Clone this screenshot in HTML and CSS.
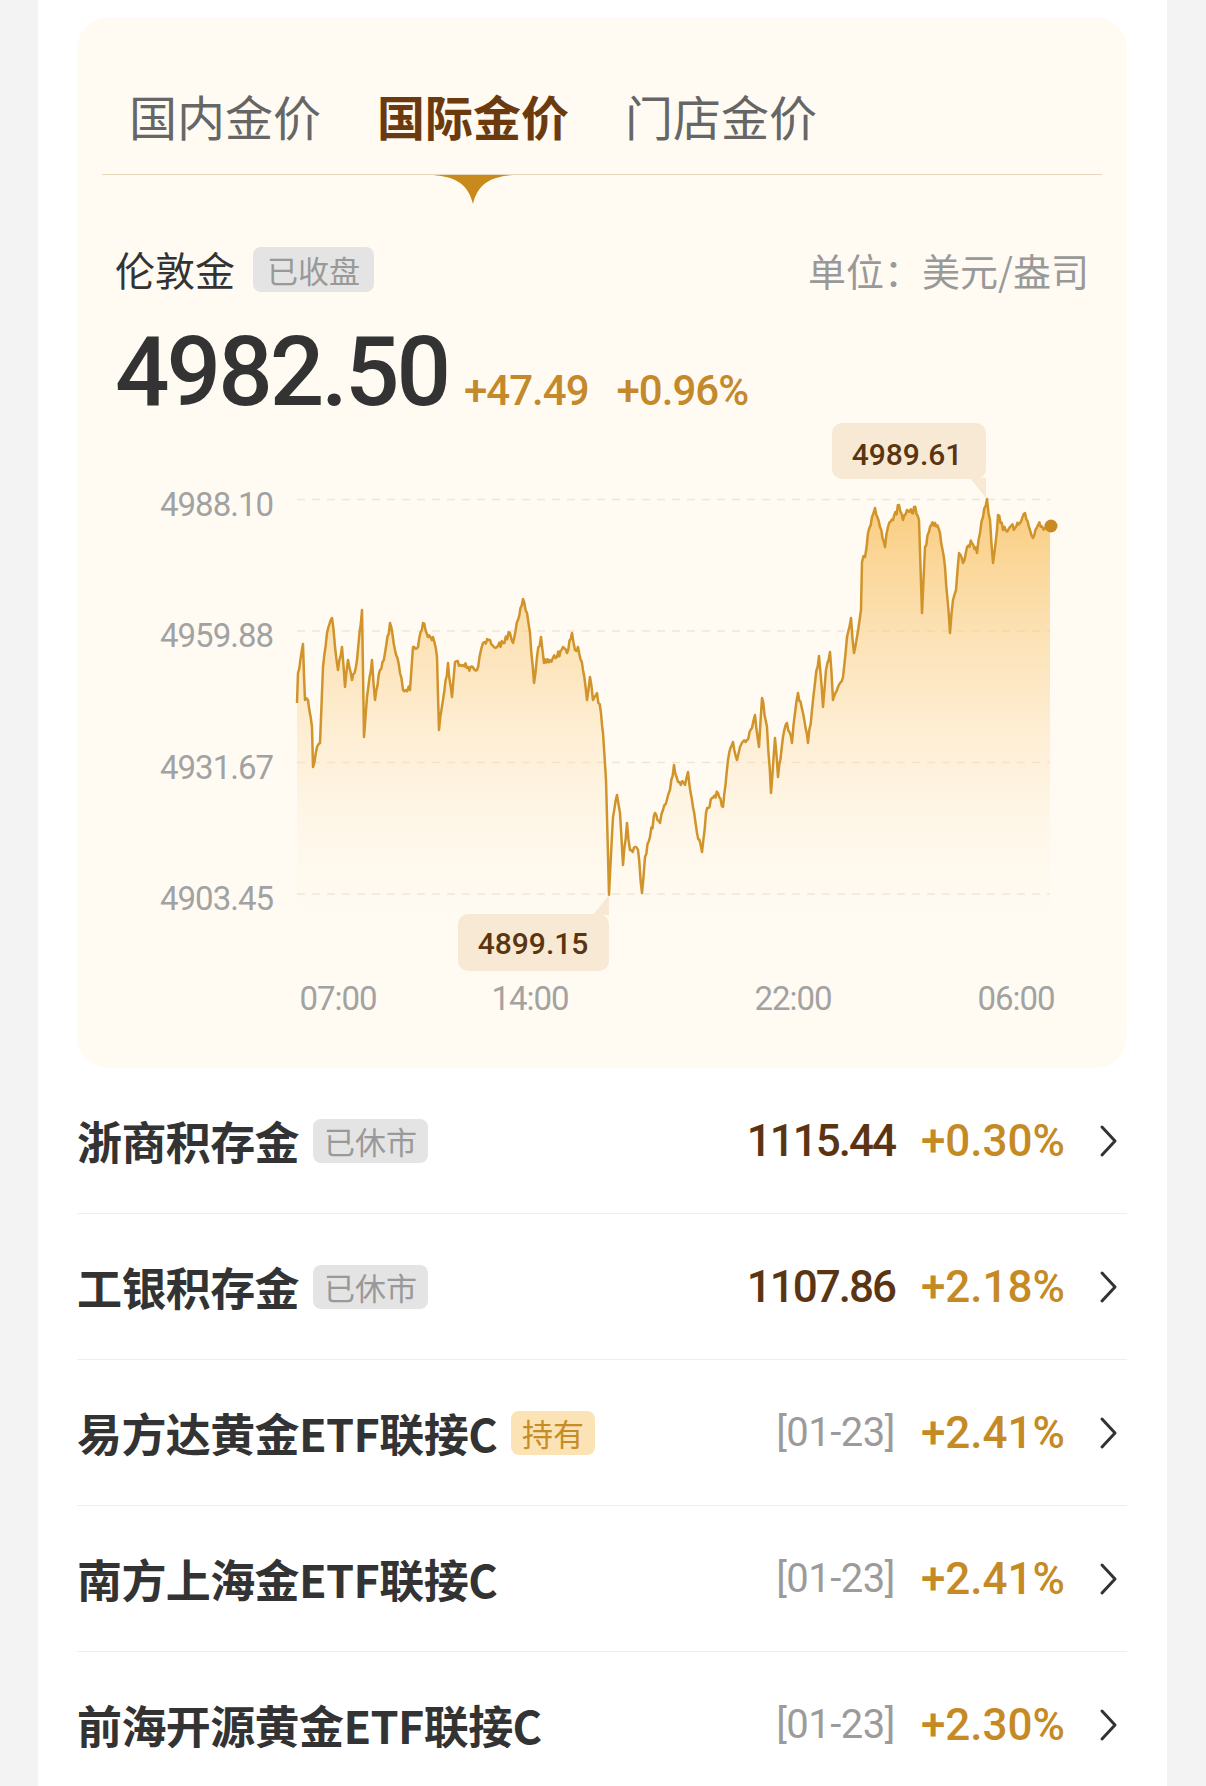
FILE: index.html
```html
<!DOCTYPE html>
<html lang="zh-CN">
<head>
  <meta charset="UTF-8" />
  <title>国际金价</title>
  <link rel="stylesheet" href="styles.css">
</head>
<body>
  <div class="page">
    <div class="card">
      <div class="tabs">
        <span class="tab">国内金价</span>
        <span class="tab active">国际金价<svg class="tab-arrow" width="80" height="29" viewBox="0 0 80 29"><path d="M0 0 H80 C57 2 45 9 40 29 C35 9 23 2 0 0 Z" fill="#c98a1d"/></svg></span>
        <span class="tab">门店金价</span>
      </div>

      <div class="quote-head">
        <span class="quote-name">伦敦金</span>
        <span class="tag">已收盘</span>
        <span class="unit">单位：美元/盎司</span>
      </div>

      <div class="price-row">
        <span class="price">4982.50</span>
        <span class="price-change">+47.49</span>
        <span class="price-change pct">+0.96%</span>
      </div>

      <svg class="chart" width="974" height="620" viewBox="0 0 974 620">
        <defs>
          <linearGradient id="fillGrad" gradientUnits="userSpaceOnUse" x1="0" y1="80" x2="0" y2="520">
            <stop offset="0" stop-color="#f8c060" stop-opacity="0.8"/>
            <stop offset="0.45" stop-color="#fbd495" stop-opacity="0.45"/>
            <stop offset="1" stop-color="#fff4e2" stop-opacity="0"/>
          </linearGradient>
        </defs>

        <!-- grid -->
        <line class="grid" x1="182" y1="79.5" x2="935" y2="79.5"/>
        <line class="grid" x1="182" y1="211" x2="935" y2="211"/>
        <line class="grid" x1="182" y1="342.5" x2="935" y2="342.5"/>
        <line class="grid" x1="182" y1="474" x2="935" y2="474"/>

        <text class="axis" x="158" y="95.5" text-anchor="end">4988.10</text>
        <text class="axis" x="158" y="227" text-anchor="end">4959.88</text>
        <text class="axis" x="158" y="358.5" text-anchor="end">4931.67</text>
        <text class="axis" x="158" y="490" text-anchor="end">4903.45</text>

        <text class="axis" x="223" y="590" text-anchor="middle">07:00</text>
        <text class="axis" x="415" y="590" text-anchor="middle">14:00</text>
        <text class="axis" x="678" y="590" text-anchor="middle">22:00</text>
        <text class="axis" x="901" y="590" text-anchor="middle">06:00</text>

        <path id="area" fill="url(#fillGrad)" d=""/>
        <path id="line" class="trend" d=""/>
        <circle cx="936" cy="106" r="6.5" fill="#c98a23"/>

        <!-- high / low tips -->
        <rect class="tip" x="717" y="3" width="154" height="56" rx="10"/>
        <polygon class="tip" points="855,58 871,58 871,78"/>
        <text class="tip-text" x="792" y="45" text-anchor="middle">4989.61</text>

        <rect class="tip" x="343" y="494" width="151" height="57" rx="10"/>
        <polygon class="tip" points="478,495 494,495 494,475"/>
        <text class="tip-text" x="418" y="534" text-anchor="middle">4899.15</text>
      </svg>
    </div>

    <ul class="list">
      <li class="row">
        <span class="row-name">浙商积存金</span>
        <span class="tag">已休市</span>
        <span class="row-right">
          <span class="row-value">1115.44</span>
          <span class="row-change">+0.30%</span>
          <svg class="chevron" width="20" height="34" viewBox="0 0 20 34"><path d="M3 3 L16 17 L3 31"/></svg>
        </span>
      </li>
      <li class="row">
        <span class="row-name">工银积存金</span>
        <span class="tag">已休市</span>
        <span class="row-right">
          <span class="row-value">1107.86</span>
          <span class="row-change">+2.18%</span>
          <svg class="chevron" width="20" height="34" viewBox="0 0 20 34"><path d="M3 3 L16 17 L3 31"/></svg>
        </span>
      </li>
      <li class="row">
        <span class="row-name">易方达黄金ETF联接C</span>
        <span class="tag held">持有</span>
        <span class="row-right">
          <span class="row-date">[01-23]</span>
          <span class="row-change">+2.41%</span>
          <svg class="chevron" width="20" height="34" viewBox="0 0 20 34"><path d="M3 3 L16 17 L3 31"/></svg>
        </span>
      </li>
      <li class="row">
        <span class="row-name">南方上海金ETF联接C</span>
        <span class="row-right">
          <span class="row-date">[01-23]</span>
          <span class="row-change">+2.41%</span>
          <svg class="chevron" width="20" height="34" viewBox="0 0 20 34"><path d="M3 3 L16 17 L3 31"/></svg>
        </span>
      </li>
      <li class="row">
        <span class="row-name">前海开源黄金ETF联接C</span>
        <span class="row-right">
          <span class="row-date">[01-23]</span>
          <span class="row-change">+2.30%</span>
          <svg class="chevron" width="20" height="34" viewBox="0 0 20 34"><path d="M3 3 L16 17 L3 31"/></svg>
        </span>
      </li>
    </ul>
  </div>

  <script>
    // intraday points, page coords (chart svg starts at 115,420)
    const OX = 115, OY = 420;
    const pts = [[297,703],[298,673],[303,644],[305,700],[308,700],[312,727],[313,767],[317,747],[320,743],[323,667],[327,633],[332,618],[335,647],[338,670],[342,647],[345,687],[348,660],[352,680],[357,660],[362,610],[364,737],[367,697],[372,660],[375,700],[380,670],[385,653],[390,623],[395,650],[400,673],[403,690],[410,690],[413,647],[418,647],[423,623],[428,637],[433,637],[437,657],[439,730],[443,700],[448,663],[452,697],[455,662],[463,665],[477,670],[483,643],[490,640],[497,647],[503,643],[510,633],[513,643],[518,620],[523,599],[527,613],[530,633],[534,683],[537,657],[541,637],[544,663],[550,660],[557,657],[563,647],[567,653],[572,633],[575,650],[578,647],[583,670],[587,700],[590,677],[593,700],[597,693],[601,713],[603,733],[606,780],[609,895],[613,817],[617,795],[620,813],[623,865],[627,823],[630,850],[638,850],[642,893],[645,857],[650,837],[655,813],[660,823],[663,810],[670,790],[674,765],[678,782],[685,785],[688,772],[693,807],[697,833],[702,852],[706,813],[712,798],[718,793],[723,807],[728,760],[733,742],[737,760],[740,747],[747,740],[752,728],[755,715],[759,747],[762,698],[767,727],[771,793],[775,738],[778,777],[783,737],[787,723],[792,743],[795,713],[798,693],[803,713],[808,743],[812,710],[815,683],[819,656],[823,707],[826,670],[830,652],[833,700],[838,687],[843,677],[847,637],[851,618],[854,653],[857,637],[861,610],[862,562],[865,557],[868,533],[872,517],[875,508],[880,527],[885,547],[888,527],[893,520],[899,505],[903,520],[907,510],[912,513],[914,507],[919,520],[922,613],[925,547],[930,527],[935,523],[940,533],[945,567],[950,633],[953,600],[956,590],[959,553],[963,563],[967,547],[972,543],[977,553],[980,533],[983,517],[987,499],[990,520],[993,563],[997,530],[998,515],[1003,530],[1010,527],[1015,528],[1020,523],[1025,513],[1030,530],[1033,538],[1038,525],[1045,528],[1050,526]];

    let seed = 20250123;
    function rand() {
      seed = (seed * 1103515245 + 12345) & 0x7fffffff;
      return seed / 0x7fffffff;
    }

    const line = [];
    for (let i = 0; i < pts.length - 1; i++) {
      const [x0, y0] = pts[i], [x1, y1] = pts[i + 1];
      const n = Math.max(1, Math.round((x1 - x0) / 1.3));
      for (let k = 0; k < n; k++) {
        const t = k / n;
        let y = y0 + (y1 - y0) * t;
        if (k > 0) y += (rand() - 0.5) * 7;
        y = Math.min(895, Math.max(499, y));
        line.push([x0 + (x1 - x0) * t, y]);
      }
    }
    line.push(pts[pts.length - 1]);

    const d = "M" + line.map(p => (p[0] - OX).toFixed(1) + "," + (p[1] - OY).toFixed(1)).join(" L");
    document.getElementById("line").setAttribute("d", d);
    document.getElementById("area").setAttribute("d", d + " L935,520 L182,520 Z");
  </script>
</body>
</html>
```

FILE: styles.css
```css
body {
  margin: 0;
  background: #f3f3f3;
  font-family: "Noto Sans CJK SC", sans-serif;
}
.page {
  width: 1129px;
  min-height: 1786px;
  margin-left: 38px;
  padding: 17px 40px 0 39px;
  box-sizing: border-box;
  background: #fff;
}

/* gold card */
.card {
  background: #fffbf3;
  border-radius: 32px;
  padding-bottom: 28px;
}
.tabs {
  display: flex;
  gap: 56px;
  margin: 0 25px;
  padding: 68px 0 0 27px;
  border-bottom: 1px solid #e7d8bd;
}
.tab {
  position: relative;
  font-size: 48px;
  line-height: 60px;
  padding-bottom: 29px;
  color: #666;
}
.tab.active {
  color: #6b3b0f;
  font-weight: 700;
}
.tab-arrow {
  position: absolute;
  left: 50%;
  margin-left: -40px;
  top: calc(100% + 1px);
}

.quote-head {
  display: flex;
  align-items: center;
  height: 46px;
  margin: 71px 38px 0;
}
.quote-name {
  font-size: 40px;
  color: #333;
}
.tag {
  font-size: 31px;
  line-height: 45px;
  padding: 0 14px;
  margin-left: 18px;
  border-radius: 8px;
  background: #e4e4e4;
  color: #999;
}
.unit {
  margin-left: auto;
  font-size: 38px;
  color: #999;
}

.price-row {
  display: flex;
  align-items: baseline;
  margin: 32px 38px 0;
  line-height: 1;
  font-family: Roboto, "Noto Sans CJK SC", sans-serif;
}
.price {
  font-size: 96px;
  font-weight: 500;
  color: #333;
  letter-spacing: -3px;
}
.price-change {
  margin-left: 16px;
  font-size: 42px;
  font-weight: 500;
  color: #c4892b;
  letter-spacing: -1px;
}
.price-change.pct {
  margin-left: 28px;
}

.chart {
  display: block;
  margin: 0 38px;
}
.chart .grid {
  stroke: #efe6d6;
  stroke-width: 1.5;
  stroke-dasharray: 8 7;
}
.chart .axis {
  font-family: Roboto, sans-serif;
  font-size: 33px;
  fill: #a2a2a2;
  letter-spacing: -1px;
}
.chart .trend {
  fill: none;
  stroke: #d0942a;
  stroke-width: 2.5;
  stroke-linejoin: round;
}
.chart .tip {
  fill: #f7e9d3;
}
.chart .tip-text {
  font-family: Roboto, sans-serif;
  font-size: 30px;
  font-weight: 500;
  fill: #5a3510;
}

/* product list */
.list {
  list-style: none;
  margin: 0;
  padding: 0;
}
.row {
  display: flex;
  align-items: center;
  height: 145px;
  padding-right: 8px;
  border-bottom: 1px solid #efefef;
}
.row-name {
  font-size: 45px;
  font-weight: 700;
  color: #333;
  letter-spacing: -0.6px;
}
.row .tag {
  margin-left: 14px;
  line-height: 44px;
  padding: 0 11px;
}
.tag.held {
  background: #fce3b6;
  color: #c68c25;
}
.row-right {
  display: flex;
  align-items: center;
  margin-left: auto;
  font-family: Roboto, "Noto Sans CJK SC", sans-serif;
}
.row-value {
  font-size: 44px;
  font-weight: 500;
  color: #5b3513;
  letter-spacing: -2px;
}
.row-date {
  font-size: 40px;
  color: #9b9b9b;
  letter-spacing: -0.5px;
}
.row-change {
  margin-left: 26px;
  font-size: 44px;
  font-weight: 500;
  color: #c58a24;
}
.chevron {
  margin-left: 34px;
}
.chevron path {
  fill: none;
  stroke: #333;
  stroke-width: 3;
  stroke-linecap: round;
  stroke-linejoin: round;
}
```
